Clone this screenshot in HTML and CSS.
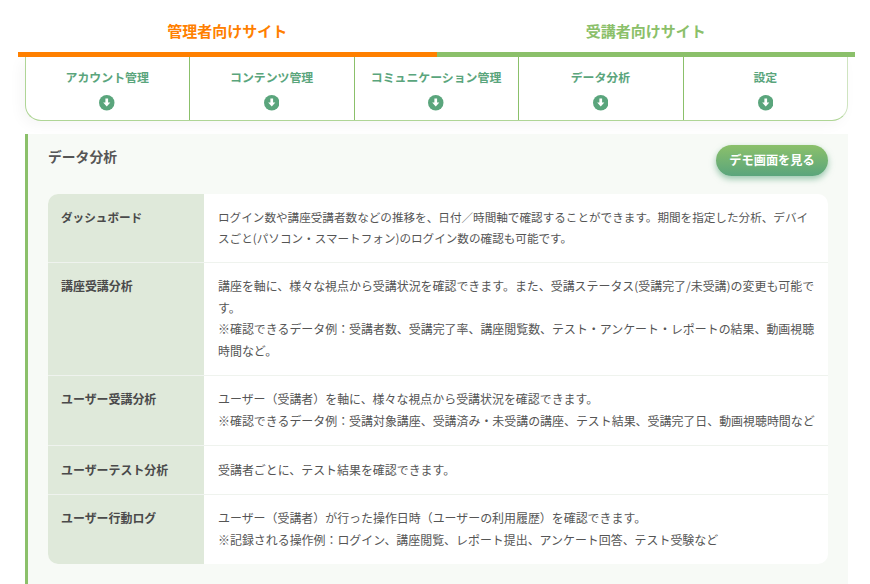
FILE: index.html
```html
<!DOCTYPE html>
<html lang="ja">
<head>
<meta charset="utf-8">
<title>データ分析</title>
<link rel="stylesheet" href="styles.css">
</head>
<body>
<div class="page">
  <div class="tabs">
    <div class="tab tab-admin">管理者向けサイト</div>
    <div class="tab tab-user">受講者向けサイト</div>
  </div>
  <nav class="nav">
    <a class="nav-item"><span class="nav-label">アカウント管理</span><svg class="arrow" viewBox="0 0 16 16"><circle cx="8" cy="8" r="8"/><path d="M6.6 3.6h2.8v4.2h2.3L8 11.9 4.3 7.8h2.3z"/></svg></a>
    <a class="nav-item"><span class="nav-label">コンテンツ管理</span><svg class="arrow" viewBox="0 0 16 16"><circle cx="8" cy="8" r="8"/><path d="M6.6 3.6h2.8v4.2h2.3L8 11.9 4.3 7.8h2.3z"/></svg></a>
    <a class="nav-item"><span class="nav-label">コミュニケーション管理</span><svg class="arrow" viewBox="0 0 16 16"><circle cx="8" cy="8" r="8"/><path d="M6.6 3.6h2.8v4.2h2.3L8 11.9 4.3 7.8h2.3z"/></svg></a>
    <a class="nav-item"><span class="nav-label">データ分析</span><svg class="arrow" viewBox="0 0 16 16"><circle cx="8" cy="8" r="8"/><path d="M6.6 3.6h2.8v4.2h2.3L8 11.9 4.3 7.8h2.3z"/></svg></a>
    <a class="nav-item"><span class="nav-label">設定</span><svg class="arrow" viewBox="0 0 16 16"><circle cx="8" cy="8" r="8"/><path d="M6.6 3.6h2.8v4.2h2.3L8 11.9 4.3 7.8h2.3z"/></svg></a>
  </nav>
  <section class="panel">
    <div class="panel-head">
      <h2 class="panel-title">データ分析</h2>
      <a class="demo-btn">デモ画面を見る</a>
    </div>
    <div class="table">
      <div class="row row-first">
        <div class="th">ダッシュボード</div>
        <div class="td">ログイン数や講座受講者数などの推移を、日付／時間軸で確認することができます。期間を指定した分析、デバイスごと(パソコン・スマートフォン)のログイン数の確認も可能です。</div>
      </div>
      <div class="row">
        <div class="th">講座受講分析</div>
        <div class="td">講座を軸に、様々な視点から受講状況を確認できます。また、受講ステータス(受講完了/未受講)の変更も可能です。<br>※確認できるデータ例：受講者数、受講完了率、講座閲覧数、テスト・アンケート・レポートの結果、動画視聴時間など。</div>
      </div>
      <div class="row">
        <div class="th">ユーザー受講分析</div>
        <div class="td">ユーザー（受講者）を軸に、様々な視点から受講状況を確認できます。<br>※確認できるデータ例：受講対象講座、受講済み・未受講の講座、テスト結果、受講完了日、動画視聴時間など</div>
      </div>
      <div class="row">
        <div class="th">ユーザーテスト分析</div>
        <div class="td">受講者ごとに、テスト結果を確認できます。</div>
      </div>
      <div class="row">
        <div class="th">ユーザー行動ログ</div>
        <div class="td">ユーザー（受講者）が行った操作日時（ユーザーの利用履歴）を確認できます。<br>※記録される操作例：ログイン、講座閲覧、レポート提出、アンケート回答、テスト受験など</div>
      </div>
    </div>
  </section>
</div>
</body>
</html>
```
FILE: styles.css
```css
* { box-sizing: border-box; }
html, body { margin: 0; padding: 0; height: 584px; overflow: hidden; background: #fff; }
body {
  font-family: "Noto Sans CJK JP", "Noto Sans", sans-serif;
  color: #555;
}
.page { padding: 0 15px 0 18px; }
.tabs { display: flex; height: 57px; }
.tab {
  flex: 1 1 50%;
  height: 57px;
  padding-top: 20px;
  text-align: center;
  font-size: 15px;
  line-height: 22px;
  font-weight: 700;
  border-bottom: 5px solid;
}
.tab-admin { color: #ff8000; border-color: #ff8000; }
.tab-user { color: #8bc06a; border-color: #8bc06a; }
.nav {
  display: flex;
  height: 64px;
  margin: 0 7px;
  background: #fff;
  border: 1px solid #afd596;
  border-top: 0;
  border-right-color: #cfe4c0;
  border-radius: 0 0 16px 16px;
  box-shadow: -4px 4px 14px rgba(0, 0, 0, 0.04);
}
.nav-item {
  flex: 1 1 0;
  display: flex;
  flex-direction: column;
  align-items: center;
  padding-top: 11px;
  border-right: 1px solid #8bc06a;
}
.nav-item:last-child { border-right: 0; }
.nav-label {
  margin-right: 1px;
  font-size: 11.9px;
  line-height: 18px;
  font-weight: 700;
  color: #5aa57c;
}
.arrow { width: 15.5px; height: 15.5px; margin: 9px 1px 0 0; }
.nav-item:last-child .nav-label, .nav-item:last-child .arrow { margin-right: 0; }
.arrow circle { fill: #5aa57c; }
.arrow path { fill: #fff; }
.panel {
  margin: 13px 7px 0;
  height: 450px;
  padding: 0 20px 0 20px;
  background: #f7faf6;
  border-left: 3px solid #8bc06a;
}
.panel-head {
  display: flex;
  justify-content: space-between;
  align-items: flex-start;
  height: 60px;
}
.panel-title {
  margin: 12px 0 0;
  font-size: 13.8px;
  line-height: 20px;
  font-weight: 700;
  color: #555;
}
.demo-btn {
  margin-top: 11px;
  width: 112px;
  height: 31px;
  border-radius: 16px;
  background: linear-gradient(#8bc06a, #5aa57c);
  box-shadow: 0 3px 6px rgba(90, 165, 124, 0.6);
  color: #fff;
  font-size: 12.2px;
  font-weight: 700;
  line-height: 31px;
  text-align: center;
}
.table {
  background: #fff;
  border-radius: 10px;
  overflow: hidden;
}
.row {
  display: grid;
  grid-template-columns: 156px 1fr;
  border-bottom: 1px solid #eff3ee;
}
.row:last-child { border-bottom: 0; }
.th {
  background: #dfe9da;
  padding: 12.4px 13px 13.6px;
  font-size: 11.94px;
  line-height: 21.6px;
  font-weight: 700;
  color: #4a4a4a;
}
.td {
  padding: 12.4px 10px 13.6px 14px;
  font-size: 11.94px;
  line-height: 21.6px;
  color: #555;
}
.row-first .th, .row-first .td { padding-top: 13px; padding-bottom: 13px; font-size: 11.6px; line-height: 20.8px; }
```
